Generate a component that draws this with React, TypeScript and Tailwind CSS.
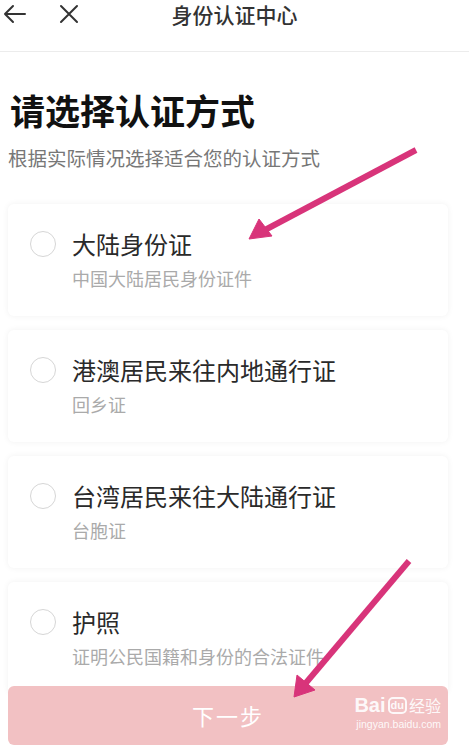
import React, { useState } from 'react';

const options = [
  { title: '大陆身份证', desc: '中国大陆居民身份证件' },
  { title: '港澳居民来往内地通行证', desc: '回乡证' },
  { title: '台湾居民来往大陆通行证', desc: '台胞证' },
  { title: '护照', desc: '证明公民国籍和身份的合法证件' },
];

function BackIcon() {
  return (
    <svg width="24" height="20" viewBox="0 0 24 20" fill="none" stroke="#333" strokeWidth="2" strokeLinecap="round" strokeLinejoin="round">
      <path d="M22 10H2M10 2L2 10l8 8" />
    </svg>
  );
}

function CloseIcon() {
  return (
    <svg width="20" height="20" viewBox="0 0 20 20" fill="none" stroke="#333" strokeWidth="2" strokeLinecap="round">
      <path d="M2 2l16 16M18 2L2 18" />
    </svg>
  );
}

// pink annotation arrows drawn over the screenshot
function Arrows() {
  return (
    <svg className="pointer-events-none absolute left-0 top-0" width="469" height="750" viewBox="0 0 469 750">
      <g fill="#d8347a" stroke="#d8347a" strokeLinecap="butt">
        <line x1="416" y1="150" x2="263" y2="231" strokeWidth="6" />
        <polygon points="249,239 259,219 272,236" strokeWidth="1" />
        <line x1="409" y1="561" x2="305" y2="684" strokeWidth="6" />
        <polygon points="294,697 297,675 315,690" strokeWidth="1" />
      </g>
    </svg>
  );
}

function App() {
  const [selected, setSelected] = useState<number | null>(null);

  return (
    <div
      className="relative h-[750px] w-[469px] overflow-hidden bg-white"
      style={{ fontFamily: '"Noto Sans CJK SC", "Noto Sans", sans-serif' }}
    >
      <div className="relative flex h-[52px] items-start border-b border-[#ececec] pt-[2px]">
        <div className="flex items-center gap-[32px] pl-[3px] pt-[2px]">
          <BackIcon />
          <CloseIcon />
        </div>
        <div className="absolute left-0 right-0 top-[1px] text-center text-[21px] font-medium leading-[26px] text-[#333]">
          身份认证中心
        </div>
      </div>

      <div className="pl-[8px] pr-[21px]">
        <h1 className="mt-[35px] pl-[2px] text-[35px] font-bold leading-[46px] text-[#111]">请选择认证方式</h1>
        <p className="mt-[13px] text-[19.5px] leading-[24px] text-[#777]">根据实际情况选择适合您的认证方式</p>

        <div className="mt-[34px] flex flex-col gap-[14px] pb-[20px]">
          {options.map((o, i) => (
            <button
              key={o.title}
              onClick={() => setSelected(i)}
              className="flex h-[112px] items-start rounded-[6px] bg-white pl-[22px] pt-[27px] text-left shadow-[0_0_6px_rgba(0,0,0,0.06)]"
            >
              <span
                className={
                  selected === i
                    ? 'h-[26px] w-[26px] shrink-0 rounded-full border-[7px] border-[#f0727a]'
                    : 'h-[26px] w-[26px] shrink-0 rounded-full border border-[#d6d6d6]'
                }
              />
              <span className="ml-[16px] flex flex-col">
                <span className="text-[24px] leading-[26px] text-[#2a2a2a]">{o.title}</span>
                <span className="mt-[10px] text-[18px] leading-[22px] text-[#aaa]">{o.desc}</span>
              </span>
            </button>
          ))}
        </div>
      </div>

      <div className="absolute bottom-[5px] left-[8px] right-[21px] flex h-[59px] items-center justify-center rounded-[6px] bg-[#f2c1c3]">
        <span className="text-[22px] tracking-[2px] text-white">下一步</span>
        <div className="absolute right-[7px] top-[9px] flex flex-col items-end leading-none text-white opacity-90">
          <span className="flex items-center text-[20px] font-bold" style={{ fontFamily: '"Liberation Sans", sans-serif' }}>
            Bai
            <span className="mx-[2px] rounded-[5px] border-2 border-white px-[1px] text-[11px] leading-[13px]">du</span>
            <span className="text-[16px] font-normal" style={{ fontFamily: '"Noto Sans CJK SC", sans-serif' }}>经验</span>
          </span>
          <span className="mt-[4px] text-[10.5px]" style={{ fontFamily: '"Liberation Sans", sans-serif' }}>jingyan.baidu.com</span>
        </div>
      </div>

      <Arrows />
    </div>
  );
}

export default App;
